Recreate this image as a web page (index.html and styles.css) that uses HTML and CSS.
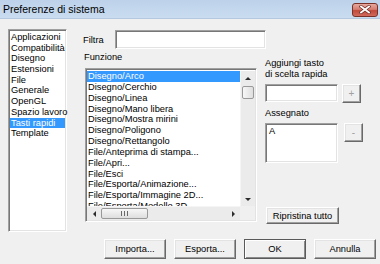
FILE: index.html
```html
<!DOCTYPE html>
<html lang="it">
<head>
    <meta charset="UTF-8">
    <title>Preferenze di sistema</title>
    <link rel="stylesheet" href="styles.css">
</head>
<body>
    <div class="window">
        <div class="titlebar">
            <span class="title">Preferenze di sistema</span>
            <span class="close">
                <svg width="12" height="9" viewBox="0 0 12 9">
                    <path d="M2 1.5 L10 7.5 M10 1.5 L2 7.5" stroke="#6e2a22" stroke-width="3.2" stroke-linecap="square"/>
                    <path d="M2 1.5 L10 7.5 M10 1.5 L2 7.5" stroke="#fff" stroke-width="1.8" stroke-linecap="square"/>
                </svg>
            </span>
        </div>
        <div class="content">
            <div class="top">
                <ul class="cats sunken">
                    <li>Applicazioni</li>
                    <li>Compatibilità</li>
                    <li>Disegno</li>
                    <li>Estensioni</li>
                    <li>File</li>
                    <li>Generale</li>
                    <li>OpenGL</li>
                    <li>Spazio lavoro</li>
                    <li class="selected">Tasti rapidi</li>
                    <li>Template</li>
                </ul>
                <div class="main">
                    <div class="filter-row">
                        <label>Filtra</label>
                        <div class="sunken filter"></div>
                    </div>
                    <div class="cols">
                        <div class="func-col">
                            <div class="func-label">Funzione</div>
                            <div class="funclist sunken">
                                <ul class="rows">
                                    <li class="selected">Disegno/Arco</li>
                                    <li>Disegno/Cerchio</li>
                                    <li>Disegno/Linea</li>
                                    <li>Disegno/Mano libera</li>
                                    <li>Disegno/Mostra mirini</li>
                                    <li>Disegno/Poligono</li>
                                    <li>Disegno/Rettangolo</li>
                                    <li>File/Anteprima di stampa...</li>
                                    <li>File/Apri...</li>
                                    <li>File/Esci</li>
                                    <li>File/Esporta/Animazione...</li>
                                    <li>File/Esporta/Immagine 2D...</li>
                                    <li>File/Esporta/Modello 3D...</li>
                                </ul>
                                <div class="vscroll">
                                    <div class="arrow"><span class="tri up"></span></div>
                                    <div class="vthumb"></div>
                                    <div class="track"></div>
                                    <div class="arrow"><span class="tri down"></span></div>
                                </div>
                                <div class="hscroll">
                                    <div class="arrow"><span class="tri left"></span></div>
                                    <div class="hthumb"><span class="grip"></span></div>
                                    <div class="track"></div>
                                    <div class="arrow"><span class="tri right"></span></div>
                                </div>
                                <div class="corner"></div>
                            </div>
                        </div>
                        <div class="side-col">
                            <div class="side-label">Aggiungi tasto<br>di scelta rapida</div>
                            <div class="key-row">
                                <div class="sunken keybox"></div>
                                <button class="btn small plus">+</button>
                            </div>
                            <div class="side-label assigned-label">Assegnato</div>
                            <div class="assigned-row">
                                <div class="sunken assigned">A</div>
                                <button class="btn small minus">-</button>
                            </div>
                            <button class="btn reset">Ripristina tutto</button>
                        </div>
                    </div>
                </div>
            </div>
            <div class="buttons">
                <button class="btn wide">Importa...</button>
                <button class="btn wide">Esporta...</button>
                <button class="btn wide default">OK</button>
                <button class="btn wide">Annulla</button>
            </div>
        </div>
    </div>
</body>
</html>
```

FILE: styles.css
```css
* {
    box-sizing: border-box;
}
body {
    margin: 0;
    font-family: "Liberation Sans", Arial, sans-serif;
    font-size: 9.3px;
    color: #000;
}
ul {
    list-style: none;
    margin: 0;
    padding: 0;
}
.window {
    width: 380px;
    height: 264px;
    background: #f0f0f0;
    overflow: hidden;
}
.titlebar {
    height: 19px;
    display: flex;
    align-items: center;
    justify-content: space-between;
    padding: 0 2px 0 3px;
    background: linear-gradient(#bdd2ea, #c9dcf0);
    border-bottom: 1px solid #b4c8df;
}
.title {
    font-size: 10.5px;
}
.close {
    width: 26px;
    height: 14px;
    margin-top: 1px;
    border: 1px solid #7a3128;
    border-radius: 3px;
    background: linear-gradient(#e6a99e, #d57d70 45%, #c14a3c 55%, #d16b5d);
    display: flex;
    align-items: center;
    justify-content: center;
}
.sunken {
    background: #fff;
    border: 1px solid;
    border-color: #a0a0a0 #fff #fff #a0a0a0;
    box-shadow: inset 1px 1px 0 #777, inset -1px -1px 0 #e3e3e3;
}
.selected {
    background: #3399ff;
    color: #fff;
}
.top {
    display: flex;
    height: 213px;
}
.cats {
    margin: 10px 0 0 8px;
    width: 59px;
    height: 203px;
    padding: 2px 1px;
}
.cats li {
    line-height: 10.7px;
    height: 10.7px;
    padding-left: 1px;
    white-space: nowrap;
}
.main {
    margin-left: 16px;
    display: flex;
    flex-direction: column;
}
.filter-row {
    margin-top: 11px;
    display: flex;
    align-items: center;
    height: 19px;
}
.filter-row label {
    width: 32px;
}
.filter {
    width: 151px;
    height: 19px;
}
.cols {
    display: flex;
}
.func-col {
    margin-left: 1px;
    width: 174px;
}
.func-label {
    margin-top: 3px;
    line-height: 11px;
}
.funclist {
    margin: 5px 0 0 1px;
    width: 172px;
    height: 154px;
    padding: 2px 1px 1px 1px;
    display: grid;
    grid-template-columns: 1fr 15px;
    grid-template-rows: 1fr 14px;
}
.rows {
    overflow: hidden;
}
.rows li {
    height: 10.85px;
    line-height: 10.85px;
    padding-left: 1px;
    white-space: nowrap;
}
.vscroll {
    display: flex;
    flex-direction: column;
    background: #ebebeb;
    border-left: 1px solid #f5f5f5;
}
.hscroll {
    display: flex;
    background: #ebebeb;
    border-top: 1px solid #f5f5f5;
}
.corner {
    background: #f0f0f0;
}
.track {
    flex: 1;
}
.arrow {
    width: 14px;
    height: 14px;
    display: flex;
    align-items: center;
    justify-content: center;
}
.vscroll .arrow {
    width: 100%;
}
.tri {
    width: 0;
    height: 0;
}
.tri.up {
    border-left: 3px solid transparent;
    border-right: 3px solid transparent;
    border-bottom: 3px solid #2c2c2c;
}
.tri.down {
    border-left: 3px solid transparent;
    border-right: 3px solid transparent;
    border-top: 3px solid #2c2c2c;
}
.tri.left {
    border-top: 3px solid transparent;
    border-bottom: 3px solid transparent;
    border-right: 3px solid #2c2c2c;
}
.tri.right {
    border-top: 3px solid transparent;
    border-bottom: 3px solid transparent;
    border-left: 3px solid #2c2c2c;
}
.vthumb {
    height: 13px;
    margin: 1px 1px 0;
    border: 1px solid #999;
    border-radius: 2px;
    background: linear-gradient(to right, #f7f7f7, #dedede);
}
.hthumb {
    width: 47px;
    margin: 1px 0;
    border: 1px solid #999;
    border-radius: 2px;
    background: linear-gradient(#f7f7f7, #dedede);
    display: flex;
    align-items: center;
    justify-content: center;
}
.grip {
    width: 7px;
    height: 5px;
    background: repeating-linear-gradient(to right, #6a6a6a 0 1px, transparent 1px 3px);
}
.side-col {
    margin-left: 7px;
    width: 100px;
}
.side-label {
    margin-top: 9px;
    line-height: 11px;
}
.assigned-label {
    margin-top: 5px;
}
.key-row {
    display: flex;
    align-items: flex-start;
    margin-top: 4px;
}
.keybox {
    width: 73px;
    height: 18px;
}
.assigned-row {
    display: flex;
    align-items: flex-start;
    margin-top: 4px;
}
.assigned {
    width: 73px;
    height: 40px;
    padding: 2px 3px;
    line-height: 11px;
}
.btn {
    font: inherit;
    color: #000;
    background: #f0f0f0;
    border: 1px solid;
    border-color: #fff #696969 #696969 #fff;
    box-shadow: inset -1px -1px 0 #a0a0a0, inset 1px 1px 0 #e3e3e3;
    padding: 0;
    cursor: pointer;
}
.small {
    width: 19px;
    height: 19px;
    color: #a0a0a0;
    font-size: 10px;
}
.plus {
    margin-left: 4px;
}
.minus {
    margin-left: 6px;
}
.reset {
    margin: 44px 0 0 1px;
    width: 73px;
    height: 17px;
}
.buttons {
    display: flex;
    justify-content: flex-end;
    gap: 8px;
    padding-right: 4px;
    margin-top: 7px;
}
.wide {
    width: 62px;
    height: 20px;
}
.default {
    border-color: #5a5a5a;
    box-shadow: inset 1px 1px 0 #fff, inset -1px -1px 0 #8a8a8a;
}
```
